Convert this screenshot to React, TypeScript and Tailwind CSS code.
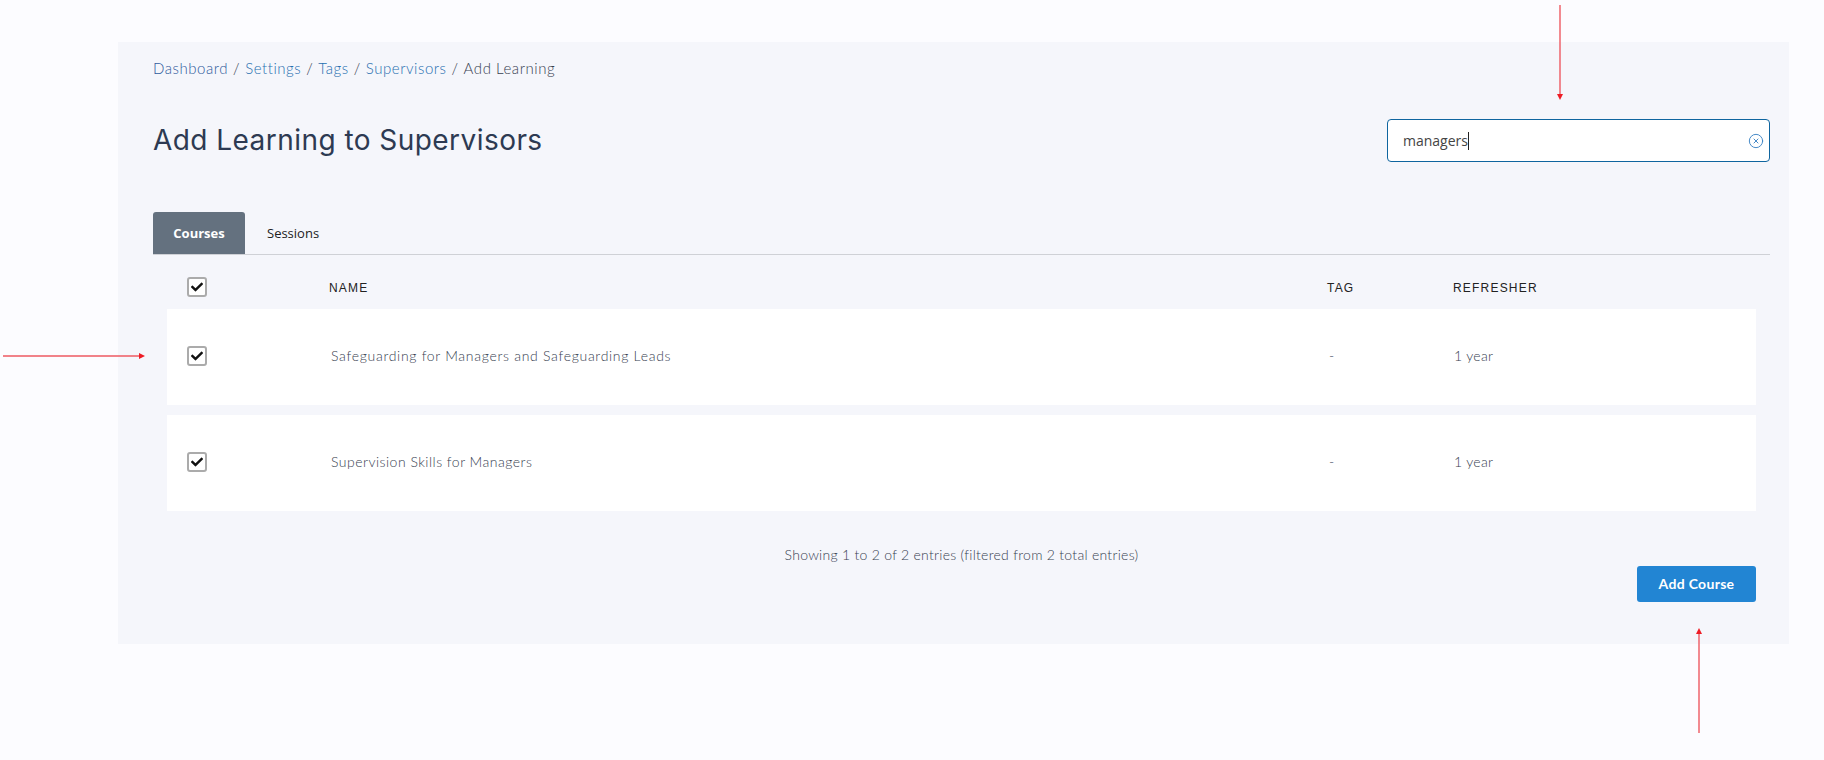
import React from "react";
import { FaCheck } from "react-icons/fa";
import { CircleX } from "lucide-react";

const q = "font-['Lato','Noto_Sans',sans-serif]";

function Check() {
  return (
    <span className="flex h-[20px] w-[20px] items-center justify-center rounded-[3px] border-2 border-[#ababab] bg-white">
      <FaCheck className="h-[12px] w-[12px] text-[#111]" />
    </span>
  );
}

function Row({ name, wide }: { name: string; wide?: boolean }) {
  return (
    <div className={`grid h-[96px] grid-cols-[143px_997px_126px_1fr] items-center bg-white pb-[2px] pl-[20px] text-[14px] font-light text-[#374151] ${q}`}>
      <Check />
      <span className={`-mt-[2px] pl-[1px] ${wide ? "tracking-[0.7px]" : "tracking-[0.49px]"}`}>{name}</span>
      <span className="-mt-[2px] pl-[2px]">-</span>
      <span className="-mt-[2px] pl-[1px] tracking-[0.3px]">1 year</span>
    </div>
  );
}

function ArrowV({ up, className }: { up?: boolean; className: string }) {
  return (
    <svg className={`absolute ${className}`} width="8" height="105" viewBox="0 0 8 105">
      {up ? (
        <>
          <line x1="4" y1="6" x2="4" y2="105" stroke="#ee5a62" strokeWidth="1.4" />
          <polygon points="4,0 7,6 1,6" fill="#ee1c25" />
        </>
      ) : (
        <>
          <line x1="4" y1="0" x2="4" y2="89" stroke="#ee5a62" strokeWidth="1.4" />
          <polygon points="4,95 7,89 1,89" fill="#ee1c25" />
        </>
      )}
    </svg>
  );
}

export default function App() {
  return (
    <div className="relative h-[760px] overflow-hidden bg-[#fcfcff] pl-[118px] pr-[35px] pt-[42px]">
      <div className="flex h-[602px] flex-col bg-[#f5f6fb] pl-[35px] pr-[19px]">
        <div className={`mt-[16px] flex h-[20px] items-center gap-[5px] text-[15px] font-light tracking-[0.55px] text-[#374151] ${q}`}>
          <span className="text-[#2f5a9c]">Dashboard</span><span>/</span>
          <span className="text-[#276fb0]">Settings</span><span>/</span>
          <span className="text-[#276fb0]">Tags</span><span>/</span>
          <span className="text-[#276fb0]">Supervisors</span><span>/</span>
          <span>Add Learning</span>
        </div>
        <div className="mt-[41px] flex h-[43px] items-center justify-between">
          <h1 className="pb-[2px] font-['Inter',sans-serif] text-[28px] font-normal tracking-[0.45px] text-[#2d3a52]">Add Learning to Supervisors</h1>
          <div className="flex h-[43px] w-[383px] items-center justify-between rounded-[4px] border border-[#0f659f] bg-white pl-[15px] pr-[5px]">
            <span className="flex items-center font-['Open_Sans',sans-serif] text-[14px] text-[#444]">
              managers<span className="h-[18px] w-[1px] bg-[#222]" />
            </span>
            <CircleX className="h-[16px] w-[16px] text-[#3a82c4]" strokeWidth={1.4} />
          </div>
        </div>
        <div className="mt-[50px] flex h-[43px] items-stretch border-b border-[#cfd1d6]">
          <div className="flex w-[92px] items-center justify-center rounded-t-[3px] bg-[#64717f] pt-[2px] font-['Open_Sans',sans-serif] text-[13px] font-bold text-white">Courses</div>
          <div className="ml-[22px] flex items-center pt-[2px] font-['Open_Sans',sans-serif] text-[13px] text-[#222]">Sessions</div>
        </div>
        <div className="mx-[14px] flex flex-col">
          <div className="grid h-[54px] grid-cols-[143px_997px_126px_1fr] items-center pl-[20px] pt-[11px] font-['Liberation_Sans',sans-serif] text-[12px] tracking-[1.2px] text-[#222]">
            <span className="-mt-[2px]"><Check /></span>
            <span className="-ml-[1px]">NAME</span>
            <span>TAG</span>
            <span>REFRESHER</span>
          </div>
          <div className="flex flex-col gap-[10px]">
            <Row wide name="Safeguarding for Managers and Safeguarding Leads" />
            <Row name="Supervision Skills for Managers" />
          </div>
          <div className={`mt-[34px] text-center text-[14px] font-light leading-[20px] tracking-[0.28px] text-[#374151] ${q}`}>
            Showing 1 to 2 of 2 entries (filtered from 2 total entries)
          </div>
          <div className="mt-[1px] flex justify-end">
            <button className={`h-[36px] w-[119px] rounded-[3px] bg-[#2285d3] pb-[2px] text-[14px] font-bold tracking-[0.3px] text-white ${q}`}>Add Course</button>
          </div>
        </div>
      </div>
      <ArrowV className="left-[1556px] top-[5px]" />
      <ArrowV up className="left-[1695px] top-[628px]" />
      <svg className="absolute left-[3px] top-[352px]" width="142" height="8" viewBox="0 0 142 8">
        <line x1="0" y1="4" x2="136" y2="4" stroke="#ee5a62" strokeWidth="1.4" />
        <polygon points="142,4 136,1 136,7" fill="#ee1c25" />
      </svg>
    </div>
  );
}
